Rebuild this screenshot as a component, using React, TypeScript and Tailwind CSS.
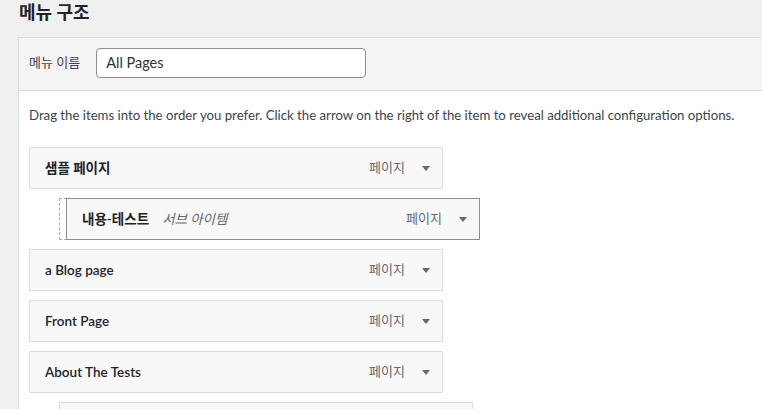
const items = [
  { title: "샘플 페이지", depth: 0 },
  { title: "내용-테스트", depth: 1, sub: true, dragging: true },
  { title: "a Blog page", depth: 0 },
  { title: "Front Page", depth: 0 },
  { title: "About The Tests", depth: 0 },
  { title: "", depth: 1 },
];

function Arrow() {
  return (
    <svg width="8" height="5" viewBox="0 0 8 5" className="shrink-0">
      <polygon points="0,0 8,0 4,5" fill="#646970" />
    </svg>
  );
}

function ItemBar({ title, sub, dark }: { title: string; sub?: boolean; dark?: boolean }) {
  return (
    <div
      className={`flex h-[42px] w-[414px] items-center border bg-[#f8f8f8] pl-[15px] pr-[12px] ${
        dark ? "border-[#8c8f94]" : "border-[#dcdcde]"
      }`}
    >
      <span className="text-[13.5px] font-semibold text-[#1d2327]">{title}</span>
      {sub && <span className="ml-[13px] text-[13.5px] italic text-[#646970]">서브 아이템</span>}
      <span className="ml-auto text-[13px] text-[#646970]">{title ? "페이지" : ""}</span>
      {title && (
        <span className="ml-[17px] flex">
          <Arrow />
        </span>
      )}
    </div>
  );
}

export default function App() {
  return (
    <div className="h-[409px] overflow-hidden bg-[#f0f0f1] font-['Lato','Noto_Sans_CJK_KR',sans-serif] text-[#3c434a]">
      <h2 className="pl-[19px] text-[18px] leading-[24px] font-bold text-[#1d2327]">메뉴 구조</h2>

      <div className="ml-[18px] mt-[13px] w-[800px] border-l border-t border-[#dcdcde] bg-white">
        {/* Header */}
        <div className="flex items-center gap-[16px] border-b border-[#dcdcde] bg-[#f4f4f4] pl-[10px] pt-[10px] pb-[12px]">
          <span className="text-[13px] text-[#3c434a]">메뉴 이름</span>
          <div className="flex h-[30px] w-[270px] items-center rounded-[4px] border border-[#8c8f94] bg-white px-[9px] text-[14.5px] text-[#2c3338]">
            All Pages
          </div>
        </div>

        {/* Body */}
        <div className="pl-[10px] pt-[14px] pb-[40px]">
          <p className="text-[13.2px] leading-[20px] text-[#3c434a]">
            Drag the items into the order you prefer. Click the arrow on the right of the item to reveal additional
            configuration options.
          </p>

          <ul className="mt-[22px] flex flex-col gap-[9px]">
            {items.map((it, i) =>
              it.dragging ? (
                <li key={i} className="relative ml-[30px] h-[42px] w-[414px] border border-dashed border-[#a7aaad]">
                  <div className="absolute -left-px -top-px translate-x-[7px]">
                    <ItemBar title={it.title} sub dark />
                  </div>
                </li>
              ) : (
                <li key={i} className={it.depth ? "ml-[30px]" : ""}>
                  <ItemBar title={it.title} />
                </li>
              )
            )}
          </ul>
        </div>
      </div>
    </div>
  );
}
